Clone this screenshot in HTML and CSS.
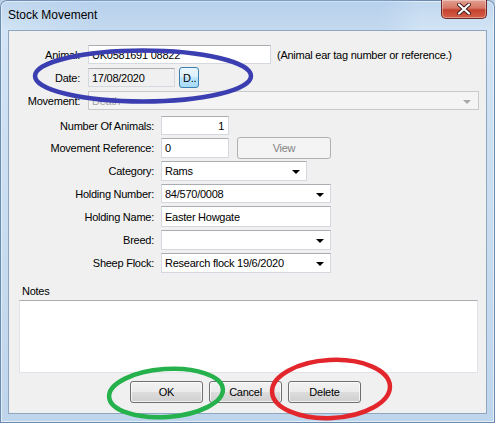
FILE: index.html
```html
<!DOCTYPE html>
<html>
<head>
<meta charset="utf-8">
<link rel="stylesheet" href="styles.css">
</head>
<body>
<div class="window">
  <div class="titlebar">
    <span class="title">Stock Movement</span>
    <div class="close">
      <svg width="18" height="12" viewBox="0 0 18 12"><path d="M4 1.5 L14 10.5 M14 1.5 L4 10.5" stroke="#3a1a1a" stroke-width="4" stroke-linecap="round"/><path d="M4 1.5 L14 10.5 M14 1.5 L4 10.5" stroke="#ffffff" stroke-width="2.2" stroke-linecap="round"/></svg>
    </div>
  </div>
  <div class="client">
    <div class="sec1">
      <div class="row r19">
        <span class="lab1">Animal:</span>
        <div class="field w-animal">UK0581691 08822</div>
        <span class="hint">(Animal ear tag number or reference.)</span>
      </div>
      <div class="row r21">
        <span class="lab1">Date:</span>
        <div class="field readonly w-date">17/08/2020</div>
        <div class="btn hot dbtn">D..</div>
      </div>
      <div class="row r19">
        <span class="lab1">Movement:</span>
        <div class="field combo disabled w-move">Death<span class="arrow grey"></span></div>
      </div>
    </div>
    <div class="sec2">
      <div class="row r19">
        <span class="lab2">Number Of Animals:</span>
        <div class="field w-num num">1</div>
      </div>
      <div class="row r20">
        <span class="lab2">Movement Reference:</span>
        <div class="field w-num">0</div>
        <div class="btn disabledbtn view">View</div>
      </div>
      <div class="row r20">
        <span class="lab2">Category:</span>
        <div class="field combo w-cat">Rams<span class="arrow"></span></div>
      </div>
      <div class="row r19">
        <span class="lab2">Holding Number:</span>
        <div class="field combo w-wide">84/570/0008<span class="arrow"></span></div>
      </div>
      <div class="row r21">
        <span class="lab2">Holding Name:</span>
        <div class="field w-wide">Easter Howgate</div>
      </div>
      <div class="row r20">
        <span class="lab2">Breed:</span>
        <div class="field combo w-wide"><span class="arrow"></span></div>
      </div>
      <div class="row r20">
        <span class="lab2">Sheep Flock:</span>
        <div class="field combo w-wide">Research flock 19/6/2020<span class="arrow"></span></div>
      </div>
    </div>
    <div class="notes-label">Notes</div>
    <div class="notes"></div>
    <div class="buttons">
      <div class="btn push">OK</div>
      <div class="btn push">Cancel</div>
      <div class="btn push">Delete</div>
    </div>
  </div>
  <svg class="marks" width="495" height="423" viewBox="0 0 495 423">
    <ellipse cx="143" cy="76" rx="108" ry="25.5" fill="none" stroke="#3a3eb0" stroke-width="4.5"/>
    <ellipse cx="166" cy="393" rx="57" ry="24" fill="none" stroke="#25b14b" stroke-width="4.5" transform="rotate(-4 166 393)"/>
    <ellipse cx="331" cy="389" rx="59" ry="29" fill="none" stroke="#e2262c" stroke-width="4.5" transform="rotate(-3 331 389)"/>
  </svg>
</div>
</body>
</html>
```
FILE: styles.css
```css
* { box-sizing: border-box; }
html, body { margin: 0; padding: 0; }
body {
  width: 495px;
  height: 423px;
  overflow: hidden;
  background: #b8cfe6;
  font-family: "Liberation Sans", Arial, sans-serif;
  font-size: 11px;
  letter-spacing: -0.25px;
  color: #000;
}
.window {
  position: relative;
  width: 495px;
  height: 423px;
  padding: 0 8px 9px 8px;
  display: flex;
  flex-direction: column;
  border-radius: 7px 7px 0 0;
  background: linear-gradient(180deg, #c0d7ef 0px, #d2e4f5 30px, #c8dcf0 60%, #bfd5ec 100%);
  box-shadow: inset 0 0 0 1px #6a8bb0, inset 0 0 0 2px #e3eef9;
}
.titlebar {
  height: 30px;
  display: flex;
  align-items: flex-start;
  background: linear-gradient(90deg, rgba(255,255,255,0) 0px, rgba(165,195,228,0.35) 100px, rgba(165,195,228,0.35) 380px, rgba(255,255,255,0) 420px);
  margin: 0 -8px;
  padding: 0 8px;
}
.title {
  padding-top: 8px;
  font-size: 12px;
  line-height: 14px;
  letter-spacing: 0;
}
.close {
  margin-left: auto;
  width: 46px;
  height: 19px;
  border: 1px solid #6b2a25;
  border-top: none;
  border-radius: 0 0 5px 5px;
  background: linear-gradient(180deg, #e4a092 0%, #d57766 45%, #c4412f 55%, #d6604a 100%);
  box-shadow: inset 0 0 0 1px rgba(255,255,255,0.35);
  display: flex;
  align-items: center;
  justify-content: center;
}
.client {
  flex: 1;
  background: #f0f0f0;
  border: 1px solid #8ea6c0;
  display: flex;
  flex-direction: column;
}
.sec1 {
  padding-top: 14px;
  display: flex;
  flex-direction: column;
  gap: 3px;
}
.sec2 {
  margin-top: 6px;
  display: flex;
  flex-direction: column;
  gap: 3px;
}
.row {
  display: flex;
  align-items: center;
}
.r19 { height: 19px; }
.r20 { height: 20px; }
.r21 { height: 21px; }
.lab1 {
  width: 71px;
  margin-right: 8px;
  text-align: right;
  white-space: nowrap;
}
.lab2 {
  width: 145px;
  margin-right: 7px;
  text-align: right;
  white-space: nowrap;
}
.field {
  position: relative;
  height: 100%;
  background: #fff;
  border: 1px solid #d5d8de;
  border-top-color: #abadb3;
  padding-left: 3px;
  display: flex;
  align-items: center;
  white-space: nowrap;
}
.field.readonly { background: #f0f0f0; height: 19px; }
.field.num { justify-content: flex-end; padding-right: 4px; }
.field.disabled { background: #f4f4f4; color: #a3a3a3; border-color: #c9c9c9; }
.combo { padding-right: 20px; }
.arrow {
  position: absolute;
  right: 6px;
  top: 50%;
  margin-top: -1px;
  width: 0;
  height: 0;
  border-left: 4px solid transparent;
  border-right: 4px solid transparent;
  border-top: 4px solid #000;
}
.arrow.grey { border-top-color: #a8a8a8; right: 7px; }
.w-animal { width: 183px; }
.w-date { width: 87px; }
.w-move { width: 391px; }
.w-num { width: 68px; }
.w-cat { width: 146px; }
.w-wide { width: 170px; }
.hint { margin-left: 6px; white-space: nowrap; }
.btn {
  display: flex;
  align-items: center;
  justify-content: center;
  border-radius: 3px;
  white-space: nowrap;
}
.hot {
  border: 1px solid #3c7fb1;
  background: linear-gradient(180deg, #eaf6fd 0%, #d9f0fc 50%, #bee6fd 50%, #a7d9f5 100%);
}
.dbtn {
  width: 20px;
  height: 21px;
  margin-left: 4px;
  justify-content: flex-start;
  padding-left: 3px;
}
.disabledbtn {
  border: 1px solid #adb2b5;
  background: #f4f4f4;
  color: #838383;
}
.view {
  width: 94px;
  height: 22px;
  margin-left: 8px;
}
.notes-label {
  margin-top: 12px;
  padding-left: 13px;
  line-height: 13px;
}
.notes {
  margin: 2px 0 0 10px;
  width: 459px;
  height: 73px;
  background: #fff;
  border: 1px solid #e2e3ea;
  border-top-color: #abadb3;
}
.buttons {
  margin-top: 8px;
  display: flex;
  justify-content: center;
  gap: 6px;
  padding-right: 4px;
}
.push {
  width: 73px;
  height: 22px;
  border: 1px solid #707070;
  background: linear-gradient(180deg, #f2f2f2 0%, #ebebeb 50%, #dddddd 50%, #cfcfcf 100%);
  box-shadow: inset 0 0 0 1px rgba(255,255,255,0.7);
}
.marks {
  position: absolute;
  top: 0;
  left: 0;
  pointer-events: none;
}
```
